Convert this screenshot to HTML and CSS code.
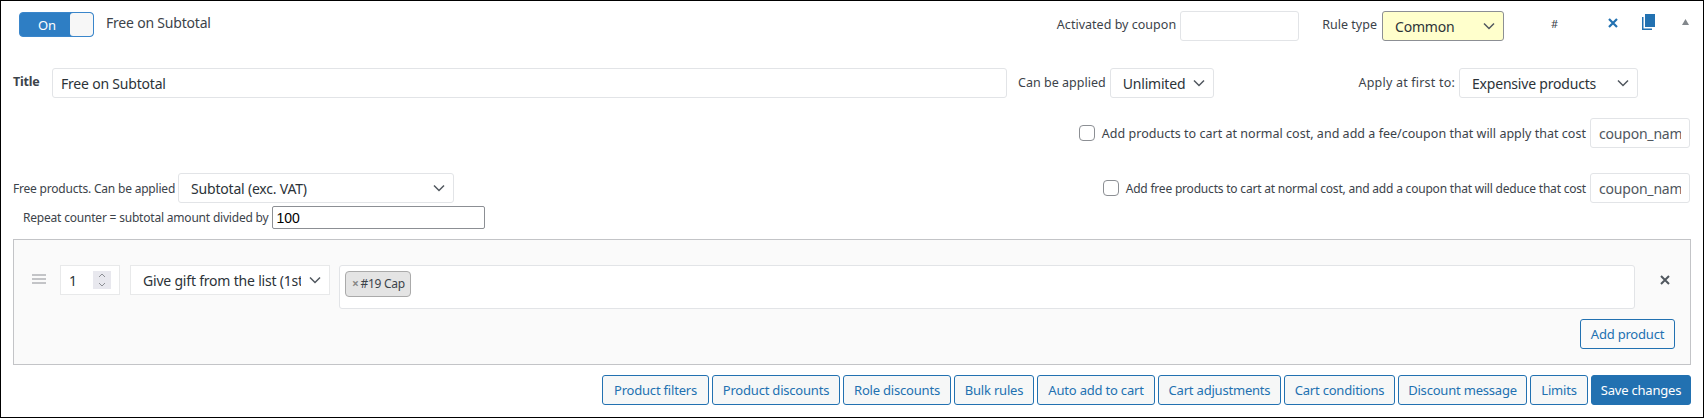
FILE: index.html
```html
<!DOCTYPE html>
<html lang="en">
<head>
<meta charset="utf-8">
<title>Free on Subtotal</title>
<link rel="stylesheet" href="styles.css">
</head>
<body>
<div class="rule">
  <div class="row row-head">
    <div class="toggle"><span class="toggle-on">On</span><span class="toggle-handle"></span></div>
    <span class="rule-name">Free on Subtotal</span>
    <div class="head-right">
      <label class="lbl" for="cp">Activated by coupon</label>
      <input id="cp" class="field w-coupon" type="text">
      <label class="lbl lbl-type" for="rt">Rule type</label>
      <select id="rt" class="field sel sel-type"><option>Common</option></select>
      <span class="hash">#</span>
      <svg class="ic-x" width="10" height="10" viewBox="0 0 10 10"><path d="M1 1l8 8M9 1l-8 8" stroke="#2271b1" stroke-width="2.2" fill="none"/></svg>
      <svg class="ic-copy" width="13" height="16" viewBox="0 0 13 16"><path d="M3 0h10v13H3z" fill="#2271b1"/><path d="M0 3h1.5v11.5H10V16H0z" fill="#2271b1"/></svg>
      <svg class="ic-up" width="7" height="6" viewBox="0 0 7 6"><path d="M3.5 0L7 6H0z" fill="#82878c"/></svg>
    </div>
  </div>
  <div class="row row-title">
    <label class="lbl-title" for="tt">Title</label>
    <input id="tt" class="field w-title" type="text" value="Free on Subtotal">
    <label class="lbl lbl-can" for="cb">Can be applied</label>
    <select id="cb" class="field sel w-unl"><option>Unlimited</option></select>
    <div class="apply">
      <label class="lbl" for="ap">Apply at first to:</label>
      <select id="ap" class="field sel w-exp"><option>Expensive products</option></select>
    </div>
  </div>
  <div class="row row-fee">
    <input class="check" type="checkbox" id="c1">
    <label class="lbl" for="c1">Add products to cart at normal cost, and add a fee/coupon that will apply that cost</label>
    <input class="field w-name" type="text" value="coupon_name">
  </div>
  <div class="row row-free">
    <label class="lbl lbl-sm" for="fp">Free products. Can be applied</label>
    <select id="fp" class="field sel w-sub"><option>Subtotal (exc. VAT)</option></select>
    <div class="free-right">
      <input class="check" type="checkbox" id="c2">
      <label class="lbl lbl-sm" for="c2">Add free products to cart at normal cost, and add a coupon that will deduce that cost</label>
      <input class="field w-name" type="text" value="coupon_name">
    </div>
  </div>
  <div class="row row-repeat">
    <label class="lbl lbl-sm" for="rp">Repeat counter = subtotal amount divided by</label>
    <input id="rp" class="repeat" type="text" value="100">
  </div>
  <div class="box">
    <div class="box-row">
      <svg class="ic-drag" width="14" height="10" viewBox="0 0 14 10"><path d="M0 0h14v2H0zM0 4h14v2H0zM0 8h14v2H0z" fill="#c3c4c7"/></svg>
      <div class="num">
        <span class="num-val">1</span>
        <span class="spin"><svg width="8" height="14" viewBox="0 0 8 14"><path d="M1 4l3-3 3 3M1 10l3 3 3-3" stroke="#8c8f94" fill="none"/></svg></span>
      </div>
      <select class="field sel w-gift"><option>Give gift from the list (1st product)</option></select>
      <div class="multi"><span class="tag"><span class="tag-x">×</span>#19 Cap</span></div>
      <svg class="ic-del" width="10" height="10" viewBox="0 0 10 10"><path d="M1 1l8 8M9 1l-8 8" stroke="#50575e" stroke-width="2" fill="none"/></svg>
    </div>
    <div class="box-foot"><button class="btn btn-light" type="button">Add product</button></div>
  </div>
  <div class="row-btns">
    <button class="btn" type="button">Product filters</button>
    <button class="btn" type="button">Product discounts</button>
    <button class="btn" type="button">Role discounts</button>
    <button class="btn" type="button">Bulk rules</button>
    <button class="btn" type="button">Auto add to cart</button>
    <button class="btn" type="button">Cart adjustments</button>
    <button class="btn" type="button">Cart conditions</button>
    <button class="btn" type="button">Discount message</button>
    <button class="btn" type="button">Limits</button>
    <button class="btn btn-primary" type="button">Save changes</button>
  </div>
</div>
</body>
</html>
```
FILE: styles.css
```css
* { box-sizing: border-box; }
html, body { margin: 0; padding: 0; background: #fff; }
body {
  font-family: "Noto Sans", "Open Sans", sans-serif;
  font-size: 13px;
  color: #3c434a;
}
.rule {
  height: 418px;
  border: 1px solid #000;
  padding: 10px 12px 0 12px;
}
.row { display: flex; align-items: center; }
.lbl { font-size: 12.5px; letter-spacing: 0.02px; white-space: nowrap; color: #3c434a; }
.lbl-sm { font-size: 12px; letter-spacing: -0.2px; }

.field {
  height: 30px;
  border: 1px solid #e2e4e7;
  border-radius: 3px;
  background-color: #fff;
  font: 14px "Noto Sans", sans-serif;
  letter-spacing: -0.2px;
  color: #2c3338;
  padding: 0 12px;
  margin: 0;
  outline: 0;
}
.sel {
  appearance: none;
  -webkit-appearance: none;
  padding-right: 26px;
  background-image: url("data:image/svg+xml,%3Csvg xmlns='http://www.w3.org/2000/svg' width='12' height='8' viewBox='0 0 12 8'%3E%3Cpath d='M1 1.5l5 5 5-5' stroke='%2350575e' stroke-width='1.5' fill='none'/%3E%3C/svg%3E");
  background-repeat: no-repeat;
  background-position: right 8px center;
}

.row-head { height: 30px; }
.toggle {
  width: 75px; height: 25px;
  margin: 1px 0 0 6px;
  display: flex;
  align-self: flex-start;
  border: 1px solid #3a86cb;
  border-radius: 4px;
  background: #2e7ec4;
  overflow: hidden;
}
.toggle-on { flex: 1; text-align: center; color: #fff; font-size: 13px; line-height: 24px; padding-left: 4px; }
.toggle-handle { width: 23px; background: #f7f7f7; border-radius: 3px; }
.rule-name { margin: -8px 0 0 12px; font-size: 14px; letter-spacing: -0.2px; }
.head-right { margin-left: auto; display: flex; align-items: center; padding-right: 2px; }
.head-right .lbl { margin-top: -3px; }
.w-coupon { width: 119px; margin-left: 4px; }
.lbl-type { margin-left: 23px; }
.sel-type {
  width: 122px;
  margin-left: 5px;
  background-color: #ffc;
  border-color: #8c8f94;
}
.hash { margin: -5px 0 0 47px; font-size: 11px; width: 7px; }
.ic-x { margin: -7px 0 0 50px; }
.ic-copy { margin: -9px 0 0 24px; }
.ic-up { margin: -9px 0 0 27px; }

.row-title { margin-top: 27px; }
.lbl-title { font-weight: 700; font-size: 12.5px; letter-spacing: -0.2px; width: 39px; margin-top: -3px; }
.w-title { width: 955px; padding: 0 8px; }
.lbl-can { margin: -1px 4px 0 11px; }
.w-unl { width: 104px; }
.apply { margin-left: auto; margin-right: 53px; display: flex; align-items: center; gap: 4px; }
.apply .lbl { margin-top: -1px; letter-spacing: 0.2px; }
.w-exp { width: 179px; }

.row-fee { margin-top: 20px; justify-content: flex-end; padding-right: 1px; }
.check {
  width: 16px; height: 16px;
  margin: 0 7px 0 0;
  appearance: none;
  -webkit-appearance: none;
  border: 1px solid #8c8f94;
  border-radius: 4px;
  background: #fff;
}
.w-name { width: 100px; padding: 0 8px; color: #50575e; margin-left: 4px; }

.row-free { margin-top: 25px; }
.w-sub { width: 276px; margin-left: 3px; }
.free-right { margin-left: auto; margin-right: 1px; display: flex; align-items: center; }

.row-repeat { margin-top: 3px; padding-left: 10px; height: 23px; }
.repeat {
  width: 213px; height: 23px;
  margin-left: 4px;
  border: 1px solid #8c8f94;
  border-radius: 2px;
  padding: 0 3px;
  font: 14px "Liberation Sans", Arial, sans-serif;
  color: #000;
  background: #fff;
}

.box {
  margin-top: 10px;
  height: 126px;
  border: 1px solid #c3c4c7;
  background: #fafafa;
  padding: 25px 15px 0 18px;
}
.box-row { display: flex; align-items: flex-start; }
.ic-drag { margin-top: 9px; }
.num {
  width: 60px; height: 30px;
  margin-left: 14px;
  background: #fff;
  border: 1px solid #e8e9ea;
  display: flex;
  align-items: center;
  justify-content: space-between;
  padding: 0 8px 0 8px;
  font-size: 14px;
  color: #2c3338;
}
.spin { width: 18px; height: 18px; background: #e8e8ee; display: flex; align-items: center; justify-content: center; }
.w-gift { width: 200px; margin-left: 10px; border-radius: 0; border-color: #e8e9ea; padding-left: 12px; padding-right: 28px; }
.multi {
  flex: 1;
  height: 44px;
  margin-left: 9px;
  border: 1px solid #e2e4e7;
  border-radius: 3px;
  background: #fff;
  padding: 5px;
  display: flex;
  align-items: flex-start;
}
.tag {
  height: 26px;
  width: 66px;
  border: 1px solid #aaa;
  border-radius: 4px;
  background: #e4e4e4;
  font-size: 12px;
  letter-spacing: -0.3px;
  line-height: 24px;
  padding-left: 6px;
  white-space: nowrap;
  color: #3c434a;
}
.tag-x { color: #888; font-weight: 700; margin-right: 2px; }
.ic-del { margin: 10px 5px 0 25px; }
.box-foot { display: flex; justify-content: flex-end; margin-top: 10px; }

.btn {
  height: 30px;
  padding: 0;
  border: 1px solid #2271b1;
  border-radius: 3px;
  background: #f6f7f7;
  color: #2271b1;
  font: 13px "Noto Sans", sans-serif;
  letter-spacing: -0.2px;
  white-space: nowrap;
  margin: 0;
}
.btn-light { background: #fafafa; width: 95px; }
.btn-primary { background: #2271b1; color: #fff; }
.row-btns {
  margin-top: 10px;
  display: grid;
  grid-template-columns: 107px 128px 108px 80px 118px 123px 111px 129px 58px 100px;
  justify-content: end;
  gap: 3px;
}
```
